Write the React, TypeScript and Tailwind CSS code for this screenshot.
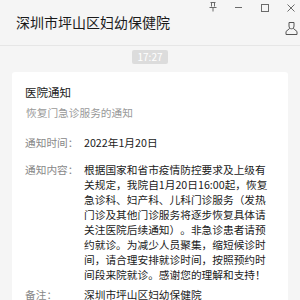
import React from 'react';

const rows = [
  { label: '通知时间：', value: '2022年1月20日' },
];

function WindowControls() {
  return (
    <div className="absolute top-0 right-0 w-[100px] h-[40px] text-[#6b6b6b]">
      {/* pin */}
      <svg className="absolute left-[9px] top-[2px]" width="8" height="10" viewBox="0 0 8 10" fill="none" stroke="currentColor" strokeWidth="1">
        <path d="M1.5 0.5h5M2.5 0.5v4M5.5 0.5v4M0.5 5.5h7M4 5.5v4" />
      </svg>
      {/* minimize */}
      <svg className="absolute left-[35px] top-[7px]" width="7" height="1" viewBox="0 0 7 1">
        <path d="M0 0.5h7" stroke="currentColor" strokeWidth="1" />
      </svg>
      {/* maximize */}
      <svg className="absolute left-[61px] top-[4px]" width="8" height="8" viewBox="0 0 8 8" fill="none">
        <rect x="0.5" y="0.5" width="7" height="7" stroke="currentColor" strokeWidth="1" />
      </svg>
      {/* close */}
      <svg className="absolute left-[87px] top-[4px]" width="8" height="8" viewBox="0 0 8 8" fill="none">
        <path d="M0.5 0.5l7 7M7.5 0.5l-7 7" stroke="currentColor" strokeWidth="1" />
      </svg>
      {/* profile */}
      <svg className="absolute left-[85px] top-[21px] text-[#555]" width="13" height="15" viewBox="0 0 13 15" fill="none" stroke="currentColor" strokeWidth="1">
        <path d="M4 1.5h5v3.5c0 1.6-1 2.8-2.5 2.8S4 6.6 4 5V1.5z" />
        <path d="M4.8 7.3L1 10.5v3h11v-3L8.2 7.3" />
        <path d="M1 13.5h11" />
      </svg>
    </div>
  );
}

export default function App() {
  return (
    <div className="w-[300px] h-[300px] overflow-hidden bg-[#f5f5f5] font-['Noto_Sans_CJK_SC',sans-serif] [text-spacing-trim:space-all]">
      <div className="relative h-[46px] border-b border-[#e6e6e6] flex items-center pl-4">
        <span className="text-[14px] leading-none text-[#1a1a1a] -mt-[2px]">深圳市坪山区妇幼保健院</span>
        <WindowControls />
      </div>

      <div className="flex justify-center mt-[4px]">
        <div className="w-[36px] h-[14px] bg-[#dcdcdc] rounded-[2px] text-white text-[10px] leading-[14px] text-center">
          17:27
        </div>
      </div>

      <div className="mx-3 mt-[8px] bg-white rounded-[3px] pl-[13px] pr-[14px] pt-[12px] pb-4 text-[10.7px] leading-[15px]">
        <div className="text-[11.5px] leading-[16px] text-[#222]">医院通知</div>
        <div className="mt-[5px] pl-px text-[#999]">恢复门急诊服务的通知</div>

        <div className="mt-[15px] grid grid-cols-[59px_1fr]">
          {rows.map((r) => (
            <React.Fragment key={r.label}>
              <div className="text-[#888]">{r.label}</div>
              <div className="text-[#1a1a1a]">{r.value}</div>
            </React.Fragment>
          ))}
        </div>

        <div className="mt-[12px] grid grid-cols-[59px_1fr]">
          <div className="text-[#888]">通知内容：</div>
          <div className="text-[#1a1a1a]">
            根据国家和省市疫情防控要求及上级有关规定，我院自1月20日16:00起，恢复急诊科、妇产科、儿科门诊服务（发热门诊及其他门诊服务将逐步恢复具体请关注医院后续通知）。非急诊患者请预约就诊。为减少人员聚集，缩短候诊时间，请合理安排就诊时间，按照预约时间段来院就诊。感谢您的理解和支持！
          </div>
        </div>

        <div className="mt-[5px] grid grid-cols-[59px_1fr]">
          <div className="text-[#888]">备注：</div>
          <div className="text-[#1a1a1a]">深圳市坪山区妇幼保健院</div>
        </div>
      </div>
    </div>
  );
}
